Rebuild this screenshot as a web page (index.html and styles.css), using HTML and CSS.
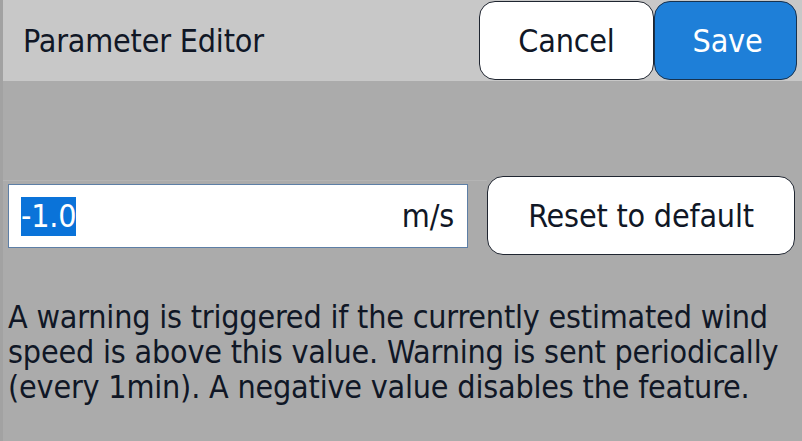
FILE: index.html
```html
<!DOCTYPE html>
<html lang="en">
<head>
  <meta charset="UTF-8">
  <title>Parameter Editor</title>
  <link rel="stylesheet" href="styles.css">
</head>
<body>

  <header class="topbar">
    <div class="title">Parameter Editor</div>
    <button class="btn btn-cancel">Cancel</button>
    <button class="btn btn-save">Save</button>
  </header>

  <div class="row">
    <div class="field-wrap">
      <div class="field">
        <span class="value">-1.0</span>
        <span class="unit">m/s</span>
      </div>
    </div>
    <button class="btn btn-reset">Reset to default</button>
  </div>

  <p class="desc">A warning is triggered if the currently estimated wind speed is above this value. Warning is sent periodically (every 1min). A negative value disables the feature.</p>

</body>
</html>
```

FILE: styles.css
```css
html, body {
  height: 100%;
}

body {
  margin: 0;
  background-color: #ababab;
  border-left: 3px solid #a2a2a2;
  color: #101726;
  font-family: "DejaVu Sans Condensed", "DejaVu Sans", sans-serif;
  font-stretch: condensed;
  font-size: 32px;
  letter-spacing: -0.2px;
  overflow: hidden;
}

.topbar {
  display: flex;
  align-items: stretch;
  height: 79px;
  padding: 1px 5px 1px 0;
  background-color: #c8c8c8;
}

.title {
  flex: 1;
  display: flex;
  align-items: center;
  padding-left: 20px;
}

.btn {
  font: inherit;
  letter-spacing: inherit;
  color: #101726;
  background-color: #fff;
  border: 1px solid #1f2530;
  border-radius: 16px;
  cursor: pointer;
}

.btn-cancel {
  width: 175px;
}

.btn-save {
  width: 143px;
  padding-left: 10px;
  background-color: #1e7fd8;
  color: #fff;
  border-color: #17324f;
}

.row {
  display: flex;
  align-items: center;
  height: 79px;
  margin-top: 95px;
}

.field-wrap {
  border-top: 1px solid #b4b4b4;
  padding: 3px 19px 3px 5px;
}

.field {
  display: flex;
  align-items: center;
  justify-content: space-between;
  box-sizing: border-box;
  width: 460px;
  height: 64px;
  padding: 0 13px 0 12px;
  background-color: #fff;
  border: 1px solid #5d7fa6;
}

.value {
  background-color: #0a73d9;
  color: #fff;
  line-height: 39px;
}

.btn-reset {
  width: 308px;
  height: 79px;
}

.desc {
  margin: 45px 0 0 5px;
  line-height: 35px;
}
```
